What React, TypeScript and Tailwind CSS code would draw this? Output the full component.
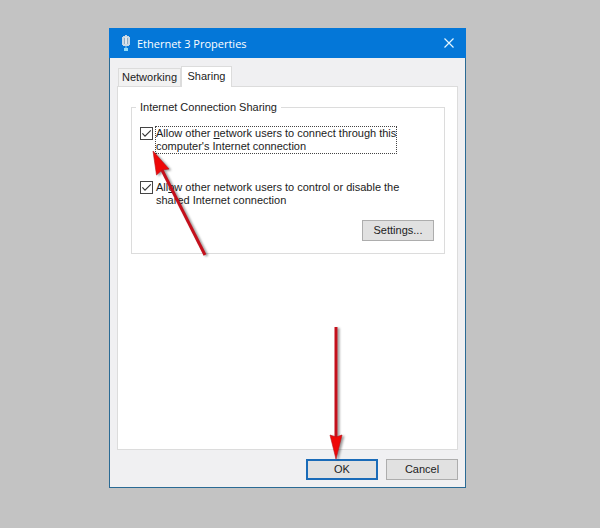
import React from 'react'

const Arrow: React.FC<{ className: string; width: number; height: number; line: string; head: string }> = ({
  className,
  width,
  height,
  line,
  head,
}) => (
  <svg
    className={`pointer-events-none absolute drop-shadow-[2px_1px_1px_rgba(0,0,0,0.4)] ${className}`}
    width={width}
    height={height}
    viewBox={`0 0 ${width} ${height}`}
    aria-hidden="true"
  >
    <path d={line} stroke="#c4101c" strokeWidth="3" fill="none" />
    <path d={head} fill="#ee0808" stroke="#b81018" strokeWidth="0.6" />
  </svg>
)

const CheckRow: React.FC<{ id: string; className: string; children: React.ReactNode }> = ({
  id,
  className,
  children,
}) => (
  <div className="flex items-start gap-0.5">
    <span className="relative mt-px flex size-[13px] shrink-0">
      <input
        id={id}
        type="checkbox"
        defaultChecked
        className="peer size-[13px] appearance-none border border-[#444] bg-white"
      />
      <svg
        className="pointer-events-none absolute inset-0 hidden peer-checked:block"
        viewBox="0 0 13 13"
        fill="none"
        stroke="#333"
        strokeWidth="1.1"
        aria-hidden="true"
      >
        <path d="M2.4 6.4 5 9.2 10.8 3.4" />
      </svg>
    </span>
    <label htmlFor={id} className={`border ${className}`}>
      {children}
    </label>
  </div>
)

const App: React.FC = () => {
  return (
    <main className="flex min-h-screen flex-col bg-[#c3c3c3] pt-7 pr-[134px] pb-10 pl-[109px] font-['Liberation_Sans',Arial,sans-serif] text-[11px] leading-[13px] text-[#1c1c1c]">
      <section className="flex flex-1 flex-col border border-[#2a6a94] bg-[#f0f0f2]">
        <header className="-mx-px -mt-px flex h-[30px] items-center bg-[#0477d8] px-3 text-white">
          <svg width="10" height="17" viewBox="0 0 10 17" aria-hidden="true">
            <path d="M2 1h2V0h2v1h2v1h1v8H8v1H2v-1H1V2h1z" fill="#c9d8e4" />
            <path d="M3.5 3v6M6.5 3v6" stroke="#8fabc2" />
            <path d="M5 2v7" stroke="#f2f6f8" />
            <path d="M4 11h2v2H4z" fill="#4aa5ea" />
            <path d="M3 13h4v3H3z" fill="#8fdcfa" />
          </svg>
          <h1 className="ml-1.5 flex-1 font-['Open_Sans',sans-serif] text-[11px]">Ethernet 3 Properties</h1>
          <button type="button" aria-label="Close">
            <svg width="10" height="10" viewBox="0 0 10 10" stroke="#e4f6ff" strokeWidth="1.2" aria-hidden="true">
              <path d="M.5.5l9 9M9.5.5l-9 9" />
            </svg>
          </button>
        </header>

        <div className="flex flex-1 flex-col px-[7px] pt-2">
          <div role="tablist" className="flex items-end">
            <button
              type="button"
              role="tab"
              aria-selected="false"
              className="ml-px h-[18px] w-[63px] border border-b-0 border-[#dcdcdc] bg-[#f2f2f2]"
            >
              Networking
            </button>
            <button
              type="button"
              role="tab"
              aria-selected="true"
              className="relative -mb-px h-[21px] w-[51px] border border-b-0 border-[#dcdcdc] bg-white pb-0.5"
            >
              Sharing
            </button>
          </div>

          <div role="tabpanel" className="flex-1 border border-[#dcdcdc] bg-white pt-[14px] pr-3 pl-[13px]">
            <fieldset className="relative border border-[#dcdcdc] pr-[10px] pb-3 pl-2">
              <legend className="-ml-1 px-1">Internet Connection Sharing</legend>
              <div className="mt-3">
                <CheckRow id="allow-connect" className="border-dotted border-[#444]">
                  Allow other <u>n</u>etwork users to connect through this
                  <br />
                  computer's Internet connection
                </CheckRow>
              </div>
              <div className="mt-[26px]">
                <CheckRow id="allow-control" className="border-transparent">
                  All<u>o</u>w other network users to control or disable the
                  <br />
                  shared Internet connection
                </CheckRow>
              </div>
              <div className="mt-3 flex justify-end">
                <button type="button" className="h-[21px] w-[72px] border border-[#adadad] bg-[#e1e1e1]">
                  Settin<u>g</u>s...
                </button>
              </div>
              <Arrow
                className="top-[34px] left-[17px]"
                width={62}
                height={110}
                line="M12 20 56 107"
                head="M4 3 7.5 27 13 22 20 21z"
              />
            </fieldset>
          </div>

          <footer className="flex justify-end gap-2 pt-[9px] pb-[7px]">
            <div className="relative">
              <button type="button" className="h-[21px] w-[72px] border-2 border-[#1a6bb8] bg-[#e1e1e1]">
                OK
              </button>
              <Arrow
                className="-top-[132px] left-[18px]"
                width={24}
                height={134}
                line="M12 0V110"
                head="M12 132 6 108 12 110 18 108z"
              />
            </div>
            <button type="button" className="h-[21px] w-[72px] border border-[#adadad] bg-[#e1e1e1]">
              Cancel
            </button>
          </footer>
        </div>
      </section>
    </main>
  )
}

export default App
